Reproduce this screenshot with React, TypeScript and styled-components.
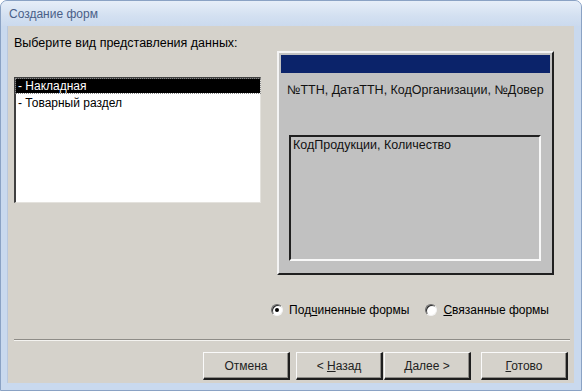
import React from "react";
import styled, { createGlobalStyle } from "styled-components";

const Global = createGlobalStyle`
  html, body { margin: 0; padding: 0; background: #ffffff; }
  * { box-sizing: border-box; }
`;

const Window = styled.div`
  width: 582px;
  height: 391px;
  display: flex;
  flex-direction: column;
  background: #c9d9ee;
  border: 1px solid #8aa2c4;
  border-radius: 7px 7px 0 0;
  font-family: "Liberation Sans", Arial, sans-serif;
  font-size: 12px;
  color: #000;
  overflow: hidden;
`;

const TitleBar = styled.div`
  height: 25px;
  flex: none;
  display: flex;
  align-items: center;
  padding-left: 8px;
  background: linear-gradient(#e6eef8, #d3e0f1 60%, #cbdaee);
  color: #4a6088;
  font-size: 12px;
`;

const Frame = styled.div`
  flex: 1;
  display: flex;
  padding: 0 7px 7px 6px;
`;

const Body = styled.div`
  flex: 1;
  display: flex;
  flex-direction: column;
  background: #d5d2cb;
  border-left: 1px solid #b9c8de;
  padding: 10px 6px 0 6px;
`;

const TopRow = styled.div`
  display: flex;
  align-items: flex-start;
  height: 240px;
`;

const LeftCol = styled.div`
  display: flex;
  flex-direction: column;
  width: 247px;
`;

const Prompt = styled.div`
  height: 15px;
  line-height: 15px;
  font-size: 12.5px;
  white-space: nowrap;
`;

const ListBox = styled.div`
  margin-top: 26px;
  height: 126px;
  background: #fff;
  border-top: 2px solid #404040;
  border-left: 2px solid #404040;
  border-right: 1px solid #e4e2dd;
  border-bottom: 1px solid #e4e2dd;
`;

const ListItem = styled.div<{ $selected?: boolean }>`
  height: 14px;
  line-height: 14px;
  padding-left: 2px;
  margin-bottom: 3px;
  background: ${(p) => (p.$selected ? "#000" : "transparent")};
  color: ${(p) => (p.$selected ? "#fff" : "#000")};
  outline: ${(p) => (p.$selected ? "1px dotted #888" : "none")};
`;

const Preview = styled.div`
  margin-left: 16px;
  margin-top: 15px;
  width: 277px;
  height: 224px;
  background: #c1c1c1;
  border-top: 2px solid #f4f4f4;
  border-left: 2px solid #f4f4f4;
  border-right: 2px solid #202020;
  border-bottom: 2px solid #202020;
  padding: 2px 2px 0 2px;
  display: flex;
  flex-direction: column;
`;

const NavyBar = styled.div`
  height: 18px;
  background: #0b236a;
`;

const MainFields = styled.div`
  padding: 10px 0 0 6px;
  height: 62px;
  color: #111;
  font-size: 12.5px;
  white-space: nowrap;
`;

const SubBox = styled.div`
  margin-left: 8px;
  width: 252px;
  height: 126px;
  border-top: 2px solid #202020;
  border-left: 2px solid #202020;
  border-right: 2px solid #f8f8f8;
  border-bottom: 2px solid #f8f8f8;
  padding: 1px 0 0 2px;
  color: #111;
  font-size: 12.5px;
`;

const OptionsRow = styled.div`
  display: flex;
  justify-content: flex-end;
  align-items: center;
  gap: 16px;
  margin-top: 24px;
  padding-right: 19px;
  height: 20px;
`;

const Option = styled.label`
  display: flex;
  align-items: center;
  gap: 6px;
`;

const Radio = styled.span<{ $checked?: boolean }>`
  width: 12px;
  height: 12px;
  border-radius: 50%;
  background: #fff;
  border: 1px solid;
  border-color: #6a6a6a #f2f2f2 #f2f2f2 #6a6a6a;
  box-shadow: inset 1px 1px 0 #2a2a2a;
  display: flex;
  align-items: center;
  justify-content: center;
  &::after {
    content: "";
    width: 4px;
    height: 4px;
    border-radius: 50%;
    background: ${(p) => (p.$checked ? "#000" : "transparent")};
  }
`;

const U = styled.span`
  text-decoration: underline;
`;

const Separator = styled.div`
  margin-top: 19px;
  height: 2px;
  border-top: 1px solid #8e8c87;
  border-bottom: 1px solid #f4f3f0;
  margin-right: -2px;
`;

const ButtonRow = styled.div`
  display: flex;
  justify-content: flex-end;
  margin-top: 11px;
`;

const Button = styled.div<{ $gap?: number }>`
  width: 87px;
  height: 28px;
  margin-left: ${(p) => p.$gap ?? 0}px;
  display: flex;
  align-items: center;
  justify-content: center;
  background: #d5d2cb;
  border-top: 1px solid #fafafa;
  border-left: 1px solid #fafafa;
  border-right: 2px solid #1e1e1e;
  border-bottom: 2px solid #1e1e1e;
  box-shadow: inset -1px -1px 0 #8e8c87;
  color: #222;
`;

export default function App() {
  return (
    <>
      <Global />
      <Window>
        <TitleBar>Создание форм</TitleBar>
        <Frame>
          <Body>
            <TopRow>
              <LeftCol>
                <Prompt>Выберите вид представления данных:</Prompt>
                <ListBox>
                  <ListItem $selected>- Накладная</ListItem>
                  <ListItem>- Товарный раздел</ListItem>
                </ListBox>
              </LeftCol>
              <Preview>
                <NavyBar />
                <MainFields>№ТТН, ДатаТТН, КодОрганизации, №Довер</MainFields>
                <SubBox>КодПродукции, Количество</SubBox>
              </Preview>
            </TopRow>
            <OptionsRow>
              <Option>
                <Radio $checked />
                <span>
                  Под<U>ч</U>иненные формы
                </span>
              </Option>
              <Option>
                <Radio />
                <span>
                  <U>С</U>вязанные формы
                </span>
              </Option>
            </OptionsRow>
            <Separator />
            <ButtonRow>
              <Button>Отмена</Button>
              <Button $gap={6}>
                <span>
                  &lt; <U>Н</U>азад
                </span>
              </Button>
              <Button $gap={1}>
                <span>
                  <U>Д</U>алее &gt;
                </span>
              </Button>
              <Button $gap={10}>
                <span>
                  <U>Г</U>отово
                </span>
              </Button>
            </ButtonRow>
          </Body>
        </Frame>
      </Window>
    </>
  );
}
